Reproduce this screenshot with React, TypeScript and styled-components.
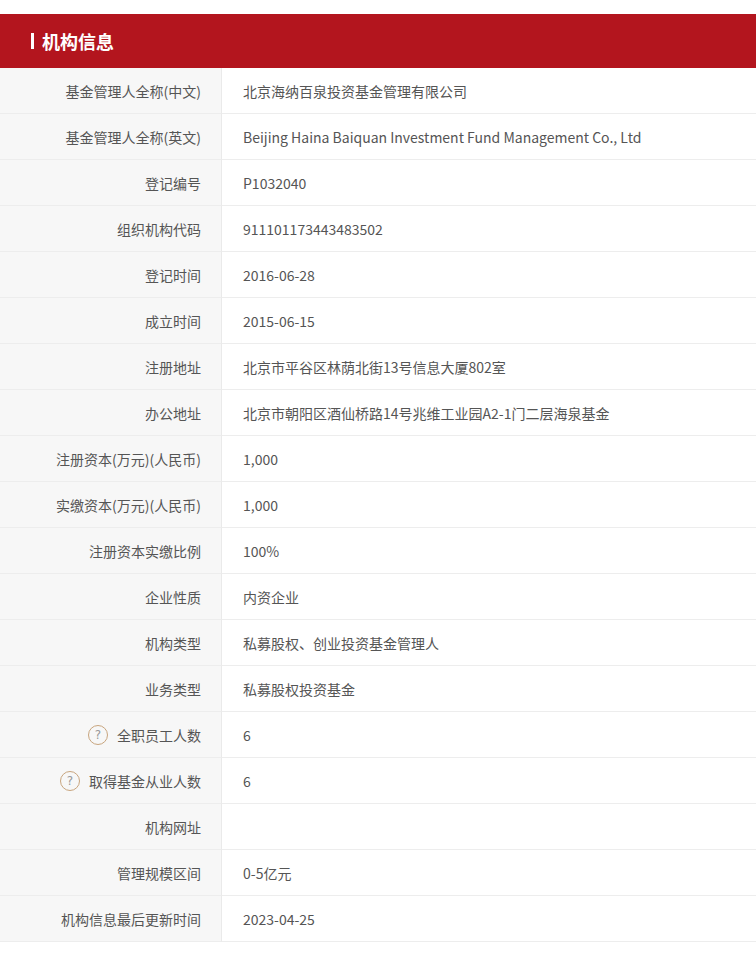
import styled, { createGlobalStyle } from "styled-components";

const Global = createGlobalStyle`
  body {
    margin: 0;
    background: #fff;
    font-family: "Microsoft YaHei", "Noto Sans CJK SC", sans-serif;
  }
`;

const Page = styled.div`
  padding-top: 14px;
`;

const Header = styled.div`
  height: 54px;
  background: #b3151e;
  display: flex;
  align-items: center;
  padding-left: 31px;
  gap: 8px;
  color: #fff;
  font-size: 18px;
  font-weight: 700;
`;

const Bar = styled.span`
  width: 3px;
  height: 16px;
  background: #fff;
`;

const Table = styled.div`
  display: grid;
  grid-template-columns: 222px 1fr;
`;

const Label = styled.div`
  height: 46px;
  box-sizing: border-box;
  background: #f7f7f7;
  border-right: 1px solid #eaeaea;
  border-bottom: 1px solid #ededed;
  display: flex;
  align-items: center;
  justify-content: flex-end;
  padding-right: 20px;
  font-size: 14px;
  color: #555;
`;

const Value = styled.div`
  height: 46px;
  box-sizing: border-box;
  border-bottom: 1px solid #ededed;
  display: flex;
  align-items: center;
  padding-left: 21px;
  font-size: 14px;
  color: #555;
`;

const Help = styled.span`
  width: 20px;
  height: 20px;
  box-sizing: border-box;
  border: 1px solid #c8a57e;
  border-radius: 50%;
  display: inline-flex;
  align-items: center;
  justify-content: center;
  font-family: "DejaVu Sans", sans-serif;
  font-size: 12px;
  color: #999;
  margin-right: 9px;
`;

const rows: [string, string, boolean?][] = [
  ["基金管理人全称(中文)", "北京海纳百泉投资基金管理有限公司"],
  ["基金管理人全称(英文)", "Beijing Haina Baiquan Investment Fund Management Co., Ltd"],
  ["登记编号", "P1032040"],
  ["组织机构代码", "911101173443483502"],
  ["登记时间", "2016-06-28"],
  ["成立时间", "2015-06-15"],
  ["注册地址", "北京市平谷区林荫北街13号信息大厦802室"],
  ["办公地址", "北京市朝阳区酒仙桥路14号兆维工业园A2-1门二层海泉基金"],
  ["注册资本(万元)(人民币)", "1,000"],
  ["实缴资本(万元)(人民币)", "1,000"],
  ["注册资本实缴比例", "100%"],
  ["企业性质", "内资企业"],
  ["机构类型", "私募股权、创业投资基金管理人"],
  ["业务类型", "私募股权投资基金"],
  ["全职员工人数", "6", true],
  ["取得基金从业人数", "6", true],
  ["机构网址", ""],
  ["管理规模区间", "0-5亿元"],
  ["机构信息最后更新时间", "2023-04-25"],
];

export default function App() {
  return (
    <Page>
      <Global />
      <Header>
        <Bar />
        机构信息
      </Header>
      <Table>
        {rows.map(([label, value, help]) => (
          <>
            <Label key={label}>
              {help && <Help>?</Help>}
              {label}
            </Label>
            <Value key={label + "v"}>{value}</Value>
          </>
        ))}
      </Table>
    </Page>
  );
}
